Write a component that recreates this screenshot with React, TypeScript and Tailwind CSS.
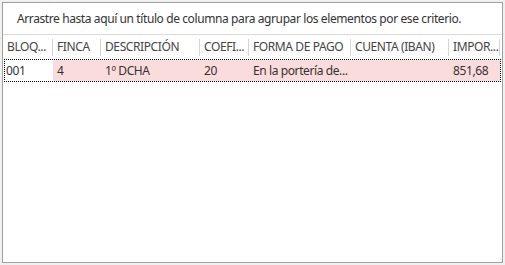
const COLUMNS = [
  { title: "BLOQ...", w: "w-[50px]" },
  { title: "FINCA", w: "w-[48px]" },
  { title: "DESCRIPCIÓN", w: "w-[99px]" },
  { title: "COEFI...", w: "w-[49px]" },
  { title: "FORMA DE PAGO", w: "w-[102px]" },
  { title: "CUENTA (IBAN)", w: "w-[98px]" },
  { title: "IMPOR...", w: "w-[51px]" },
];

const ROW = ["001", "4", "1º DCHA", "20", "En la portería de...", "", "851,68"];

export default function App() {
  return (
    <div className="h-[265px] w-[505px] bg-[#f0f0f0] p-[2px] font-['Segoe_UI','Noto_Sans',sans-serif] text-[12px] tracking-[-0.4px]">
      <div className="flex h-[261px] w-[501px] flex-col border border-[#a0a0a0] bg-white">
        {/* group-by panel */}
        <div className="flex h-[32px] items-center border-b border-[#dcdcdc] pl-[14px] text-[#333]">
          Arrastre hasta aquí un título de columna para agrupar los elementos por ese criterio.
        </div>

        {/* header */}
        <div className="flex h-[24px] items-center">
          {COLUMNS.map((c) => (
            <div key={c.title} className={`flex h-full shrink-0 items-center ${c.w}`}>
              <span className="flex-1 overflow-hidden whitespace-nowrap pl-[4px] text-[#444]">{c.title}</span>
              <div className="h-[17px] w-px bg-[#d5d5d5]" />
            </div>
          ))}
        </div>

        {/* data row */}
        <div className="ml-[1px] flex h-[23px] w-[497px] border border-dotted border-black">
          {ROW.map((v, i) => (
            <div
              key={i}
              className={`flex shrink-0 items-center overflow-hidden whitespace-nowrap text-[#333] ${
                i === 0 ? "w-[48px] bg-white pl-[1px]" : "bg-[#fbdcdc] pl-[4px]"
              } ${i === 0 ? "" : COLUMNS[i].w} ${i === 6 ? "flex-1" : ""}`}
            >
              {v}
            </div>
          ))}
        </div>
      </div>
    </div>
  );
}
